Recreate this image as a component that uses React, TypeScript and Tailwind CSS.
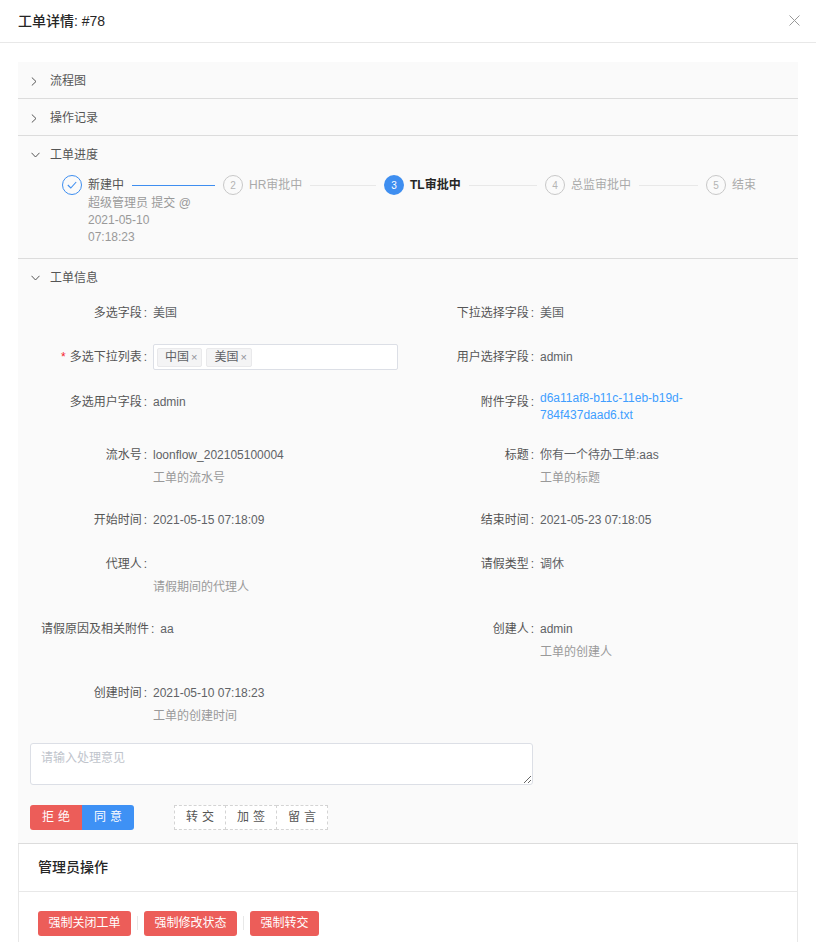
import React from "react";

type Field = {
  label: string;
  value?: string;
  help?: string;
  required?: boolean;
  kind?: "select" | "link";
};

const rows: (Field | null)[][] = [
  [
    { label: "多选字段", value: "美国" },
    { label: "下拉选择字段", value: "美国" },
  ],
  [
    { label: "多选下拉列表", required: true, kind: "select" },
    { label: "用户选择字段", value: "admin" },
  ],
  [
    { label: "多选用户字段", value: "admin" },
    { label: "附件字段", value: "d6a11af8-b11c-11eb-b19d-784f437daad6.txt", kind: "link" },
  ],
  [
    { label: "流水号", value: "loonflow_202105100004", help: "工单的流水号" },
    { label: "标题", value: "你有一个待办工单:aas", help: "工单的标题" },
  ],
  [
    { label: "开始时间", value: "2021-05-15 07:18:09" },
    { label: "结束时间", value: "2021-05-23 07:18:05" },
  ],
  [
    { label: "代理人", value: "", help: "请假期间的代理人" },
    { label: "请假类型", value: "调休" },
  ],
  [
    { label: "请假原因及相关附件", value: "aa" },
    { label: "创建人", value: "admin", help: "工单的创建人" },
  ],
  [{ label: "创建时间", value: "2021-05-10 07:18:23", help: "工单的创建时间" }, null],
];

const steps = [
  { n: 1, title: "新建中", status: "finish" },
  { n: 2, title: "HR审批中", status: "wait" },
  { n: 3, title: "TL审批中", status: "process" },
  { n: 4, title: "总监审批中", status: "wait" },
  { n: 5, title: "结束", status: "wait" },
];

function Arrow({ open }: { open?: boolean }) {
  return (
    <div className="w-[19px] flex items-center">
      {open ? (
        <svg width="9" height="6" viewBox="0 0 9 6">
          <polyline points="0.5,0.8 4.5,5 8.5,0.8" fill="none" stroke="#555" strokeWidth="1" />
        </svg>
      ) : (
        <svg width="6" height="9" viewBox="0 0 6 9">
          <polyline points="0.8,0.5 5,4.5 0.8,8.5" fill="none" stroke="#555" strokeWidth="1" />
        </svg>
      )}
    </div>
  );
}

function PanelHeader({ title, open }: { title: string; open?: boolean }) {
  return (
    <div className="flex h-[36px] items-center pl-[13px] pt-[2px] text-[12px] text-[#555]">
      <Arrow open={open} />
      <span>{title}</span>
    </div>
  );
}

function StepIcon({ n, status }: { n: number; status: string }) {
  if (status === "finish") {
    return (
      <div className="w-[20px] h-[20px] shrink-0 rounded-full border border-[#3e8ef0] flex items-center justify-center">
        <svg width="10" height="8" viewBox="0 0 10 8">
          <polyline points="0.8,4 3.8,7 9.2,1" fill="none" stroke="#3e8ef0" strokeWidth="1.1" />
        </svg>
      </div>
    );
  }
  if (status === "process") {
    return (
      <div className="w-[20px] h-[20px] shrink-0 rounded-full bg-[#3e8ef0] text-white text-[10px] flex items-center justify-center">
        {n}
      </div>
    );
  }
  return (
    <div className="w-[20px] h-[20px] shrink-0 rounded-full border border-[#c8c8c8] text-[#b4b4b4] text-[10px] flex items-center justify-center">
      {n}
    </div>
  );
}

function Steps() {
  return (
    <div className="flex pl-[44px] pr-[42px] pt-[3px] pb-[12px]">
      {steps.map((s, i) => {
        const last = i === steps.length - 1;
        const titleColor =
          s.status === "process"
            ? "text-[#262626] font-bold"
            : s.status === "finish"
            ? "text-[#555]"
            : "text-[#aaa]";
        return (
          <div key={s.n} className={`flex items-start ${last ? "flex-none" : "flex-1"}`}>
            <StepIcon n={s.n} status={s.status} />
            <div className={`ml-[6px] ${last ? "" : "flex-1"}`}>
              <div className="flex items-center h-[20px]">
                <span className={`whitespace-nowrap text-[12px] ${titleColor}`}>{s.title}</span>
                {!last && (
                  <div
                    className={`flex-1 h-px ml-[8px] mr-[8px] ${
                      s.status === "finish" ? "bg-[#3e8ef0]" : "bg-[#e8e8e8]"
                    }`}
                  />
                )}
              </div>
              {s.status === "finish" && (
                <div className="max-w-[110px] text-[12px] leading-[17px] text-[#999]">
                  超级管理员 提交 @ 2021-05-10 07:18:23
                </div>
              )}
            </div>
          </div>
        );
      })}
    </div>
  );
}

function MultiSelect() {
  return (
    <div className="w-[245px] h-[26px] bg-white border border-[#dcdfe6] rounded-[2px] flex items-center pl-[3px] gap-[4px]">
      {["中国", "美国"].map((t) => (
        <span
          key={t}
          className="h-[19px] flex items-center pl-[7px] pr-[4px] bg-[#f4f4f5] border border-[#e9e9eb] rounded-[2px] text-[12px] text-[#606266]"
        >
          {t}
          <span className="ml-[2px] text-[11px] text-[#909399]">×</span>
        </span>
      ))}
    </div>
  );
}

function FieldCell({ f, labelW }: { f: Field | null; labelW: string }) {
  if (!f) return <div />;
  return (
    <div className="flex items-start pb-[12.5px] text-[12px]">
      <div className={`${labelW} shrink-0 h-[32px] flex items-center justify-end whitespace-nowrap text-[#555]`}>
        {f.required && <span className="text-[#f5222d] mr-[4px]">*</span>}
        <span>{f.label}</span>
        <span className="ml-[2px] mr-[6px]">:</span>
      </div>
      <div className="flex flex-col">
        {f.kind === "select" ? (
          <div className="h-[32px] flex items-center">
            <MultiSelect />
          </div>
        ) : f.kind === "link" ? (
          <div className="w-[220px] pt-[4px] pb-[3px] leading-[17px] text-[#409eff] break-words">
            {f.value}
          </div>
        ) : (
          <div className="h-[32px] flex items-center text-[#606266]">{f.value}</div>
        )}
        {f.help && <div className="leading-[14px] pb-[6px] text-[#999]">{f.help}</div>}
      </div>
    </div>
  );
}

function ChineseBtn({ text, className }: { text: string; className: string }) {
  return (
    <button className={`h-[25px] w-[52px] flex items-center justify-center text-[12px] ${className}`}>
      <span className="tracking-[0.34em] mr-[-0.34em]">{text}</span>
    </button>
  );
}

export default function App() {
  return (
    <div className="min-h-screen bg-white font-['Liberation_Sans','Noto_Sans_CJK_SC',sans-serif]">
      <div className="h-[43px] flex items-center justify-between pl-[18px] pr-[16px] border-b border-[#e8e8e8]">
        <span className="text-[14px] font-medium text-[#262626]">工单详情: #78</span>
        <svg width="11" height="11" viewBox="0 0 11 11" className="-mt-[2px]">
          <path d="M0.5 0.5 L10.5 10.5 M10.5 0.5 L0.5 10.5" stroke="#999" strokeWidth="1" />
        </svg>
      </div>

      <div className="px-[18px] pt-[19px]">
        <div className="bg-[#fafafa]">
          <div className="border-b border-[#dcdcdc]">
            <PanelHeader title="流程图" />
          </div>
          <div className="border-b border-[#dcdcdc]">
            <PanelHeader title="操作记录" />
          </div>
          <div className="border-b border-[#dcdcdc]">
            <PanelHeader title="工单进度" open />
            <Steps />
          </div>
          <div className="border-b border-[#dcdcdc]">
            <PanelHeader title="工单信息" open />
            <div className="pl-[12px] pt-[1.5px] pb-[13px]">
              <div className="grid grid-cols-[369px_1fr] pl-[11px]">
                {rows.map((r, i) => (
                  <React.Fragment key={i}>
                    <FieldCell f={r[0]} labelW="min-w-[112px]" />
                    <FieldCell f={r[1]} labelW="min-w-[130px]" />
                  </React.Fragment>
                ))}
              </div>
              <textarea
                placeholder="请输入处理意见"
                className="block mt-[1px] w-[503px] h-[42px] bg-white border border-[#dcdfe6] rounded-[3px] px-[10px] py-[5px] text-[12px] leading-[18px] text-[#606266] placeholder:text-[#c0c4cc] outline-none"
              />
              <div className="flex items-center mt-[20px]">
                <ChineseBtn text="拒绝" className="bg-[#ec5d59] text-white rounded-l-[3px]" />
                <ChineseBtn text="同意" className="bg-[#3e91f5] text-white rounded-r-[3px]" />
                <div className="flex ml-[40px]">
                  <ChineseBtn text="转交" className="bg-white border border-dashed border-[#d4d4d4] text-[#555]" />
                  <ChineseBtn text="加签" className="-ml-px bg-white border border-dashed border-[#d4d4d4] text-[#555]" />
                  <ChineseBtn text="留言" className="-ml-px bg-white border border-dashed border-[#d4d4d4] text-[#555]" />
                </div>
              </div>
            </div>
          </div>
        </div>

        <div className="bg-white border border-t-0 border-[#e8e8e8]">
          <div className="h-[48px] flex items-center px-[19px] border-b border-[#e8e8e8] text-[14px] font-medium text-[#262626]">
            管理员操作
          </div>
          <div className="flex items-center px-[19px] pt-[19px] pb-[20px]">
            {["强制关闭工单", "强制修改状态", "强制转交"].map((t, i) => (
              <React.Fragment key={t}>
                {i > 0 && <div className="w-px h-[14px] bg-[#e8e8e8] ml-[6px] mr-[6px]" />}
                <button className="h-[25px] px-[10.5px] rounded-[3px] bg-[#ec5d59] text-white text-[12px]">
                  {t}
                </button>
              </React.Fragment>
            ))}
          </div>
        </div>
      </div>
    </div>
  );
}
